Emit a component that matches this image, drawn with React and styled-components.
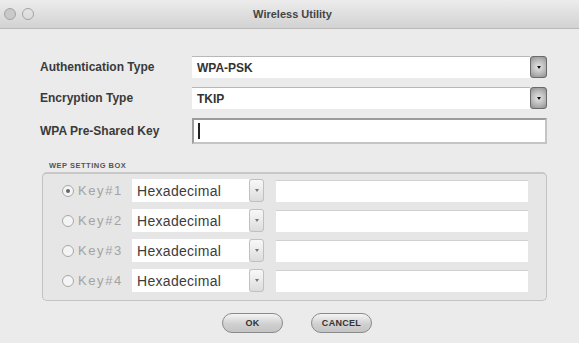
import React from "react";
import styled, { createGlobalStyle } from "styled-components";

const Global = createGlobalStyle`
  html, body { margin: 0; padding: 0; background: #ececec; }
  body { font-family: "Liberation Sans", Arial, sans-serif; }
`;

const Window = styled.div`
  width: 579px;
  height: 343px;
  background: #ebebeb;
  display: flex;
  flex-direction: column;
  overflow: hidden;
`;

const TitleBar = styled.div`
  height: 29px;
  flex: none;
  display: flex;
  align-items: center;
  position: relative;
  background: linear-gradient(#ececec, #d2d2d2);
  border-bottom: 1px solid #b9b9b9;
  box-sizing: border-box;
`;

const Lights = styled.div`
  position: absolute;
  left: 4px;
  top: 8px;
  display: flex;
  gap: 6px;
`;

const Light = styled.span`
  width: 10px;
  height: 10px;
  border-radius: 50%;
  border: 1.5px solid #a4a4a4;
  background: ${(p) => (p.$filled ? "#c9c9c9" : "transparent")};
`;

const Title = styled.div`
  flex: 1;
  text-align: center;
  font-size: 11px;
  font-weight: bold;
  color: #444;
  padding-left: 6px;
`;

const Body = styled.div`
  flex: 1;
  padding: 27px 32px 0 40px;
  display: flex;
  flex-direction: column;
`;

const FormGrid = styled.div`
  display: grid;
  grid-template-columns: 152px 355px;
  grid-template-rows: 22px 22px 26px;
  row-gap: 9px;
  align-items: center;
`;

const Label = styled.div`
  font-size: 12px;
  font-weight: bold;
  color: #3a3a3a;
`;

const SelectBox = styled.div`
  height: 22px;
  display: flex;
  align-items: stretch;
`;

const SelectField = styled.div`
  flex: 1;
  background: #fff;
  border-top: 1px solid #b8b8b8;
  display: flex;
  align-items: center;
  padding-left: 5px;
  font-size: 12px;
  font-weight: bold;
  color: #333;
`;

const DarkButton = styled.div`
  width: 17px;
  border: 1px solid #6a6a6a;
  border-radius: 3px;
  background: radial-gradient(circle, #e6e6e6 0%, #b5b5b5 60%, #8e8e8e 100%);
  display: flex;
  align-items: center;
  justify-content: center;
  box-sizing: border-box;
`;

const Tri = styled.span`
  width: 0;
  height: 0;
  border-left: ${(p) => p.$s}px solid transparent;
  border-right: ${(p) => p.$s}px solid transparent;
  border-top: ${(p) => p.$s + 1}px solid ${(p) => p.$c};
`;

const TextInput = styled.div`
  height: 26px;
  box-sizing: border-box;
  background: #fff;
  border: 2px solid #9c9c9c;
  border-right-color: #c4c4c4;
  border-bottom-color: #c4c4c4;
  display: flex;
  align-items: center;
  padding-left: 4px;
`;

const Caret = styled.span`
  width: 2px;
  height: 16px;
  background: #222;
`;

const GroupLabel = styled.div`
  margin: 17px 0 0 9px;
  font-size: 7.5px;
  font-weight: bold;
  color: #555;
  letter-spacing: 0.5px;
  height: 9px;
`;

const GroupBox = styled.div`
  margin: 2px 0 0 2px;
  width: 505px;
  height: 129px;
  box-sizing: border-box;
  border: 1px solid #c2c2c2;
  border-top: 2px solid #c7c7c7;
  border-radius: 5px;
  background: #e6e6e6;
  padding: 5px 0 0 19px;
  display: flex;
  flex-direction: column;
  gap: 7px;
`;

const KeyRow = styled.div`
  height: 23px;
  display: flex;
  align-items: center;
`;

const Radio = styled.span`
  width: 10px;
  height: 10px;
  border-radius: 50%;
  border: 1px solid #a8a8a8;
  background: #f4f4f4;
  display: flex;
  align-items: center;
  justify-content: center;
  flex: none;
  &::after {
    content: "";
    width: 4px;
    height: 4px;
    border-radius: 50%;
    background: ${(p) => (p.$on ? "#666" : "transparent")};
  }
`;

const KeyLabel = styled.span`
  font-size: 13px;
  color: #a3a3a3;
  letter-spacing: 1.6px;
  width: 54px;
  margin-left: 4px;
  flex: none;
  white-space: nowrap;
`;

const KeySelect = styled.div`
  width: 132px;
  height: 23px;
  display: flex;
  flex: none;
`;

const KeyField = styled.div`
  flex: 1;
  background: #fff;
  display: flex;
  align-items: center;
  padding-left: 5px;
  font-size: 14px;
  color: #3c3c3c;
  letter-spacing: 0.3px;
`;

const LightButton = styled.div`
  width: 15px;
  box-sizing: border-box;
  border: 1px solid #c0c0c0;
  border-radius: 3px;
  background: linear-gradient(#f8f8f8, #dcdcdc);
  display: flex;
  align-items: center;
  justify-content: center;
`;

const KeyInput = styled.div`
  width: 252px;
  height: 21px;
  margin-left: 12px;
  background: #fff;
  border-top: 1px solid #d0d0d0;
`;

const ButtonRow = styled.div`
  display: flex;
  justify-content: center;
  gap: 28px;
  margin: 12px 0 0 7px;
`;

const PushButton = styled.div`
  width: 61px;
  height: 20px;
  box-sizing: border-box;
  border: 1px solid #8a8a8a;
  border-radius: 10px;
  background: linear-gradient(#f5f5f5, #d0d0d0 55%, #c4c4c4);
  display: flex;
  align-items: center;
  justify-content: center;
  font-size: 9px;
  font-weight: bold;
  color: #333;
  letter-spacing: 0.3px;
`;

const keys = [1, 2, 3, 4];

export default function App() {
  return (
    <>
      <Global />
      <Window>
        <TitleBar>
          <Lights>
            <Light $filled />
            <Light />
          </Lights>
          <Title>Wireless Utility</Title>
        </TitleBar>
        <Body>
          <FormGrid>
            <Label>Authentication Type</Label>
            <SelectBox>
              <SelectField>WPA-PSK</SelectField>
              <DarkButton>
                <Tri $s={2.5} $c="#111" />
              </DarkButton>
            </SelectBox>
            <Label>Encryption Type</Label>
            <SelectBox>
              <SelectField>TKIP</SelectField>
              <DarkButton>
                <Tri $s={2.5} $c="#111" />
              </DarkButton>
            </SelectBox>
            <Label>WPA Pre-Shared Key</Label>
            <TextInput>
              <Caret />
            </TextInput>
          </FormGrid>
          <GroupLabel>WEP SETTING BOX</GroupLabel>
          <GroupBox>
            {keys.map((k) => (
              <KeyRow key={k}>
                <Radio $on={k === 1} />
                <KeyLabel>Key#{k}</KeyLabel>
                <KeySelect>
                  <KeyField>Hexadecimal</KeyField>
                  <LightButton>
                    <Tri $s={2.5} $c="#777" />
                  </LightButton>
                </KeySelect>
                <KeyInput />
              </KeyRow>
            ))}
          </GroupBox>
          <ButtonRow>
            <PushButton>OK</PushButton>
            <PushButton>CANCEL</PushButton>
          </ButtonRow>
        </Body>
      </Window>
    </>
  );
}
